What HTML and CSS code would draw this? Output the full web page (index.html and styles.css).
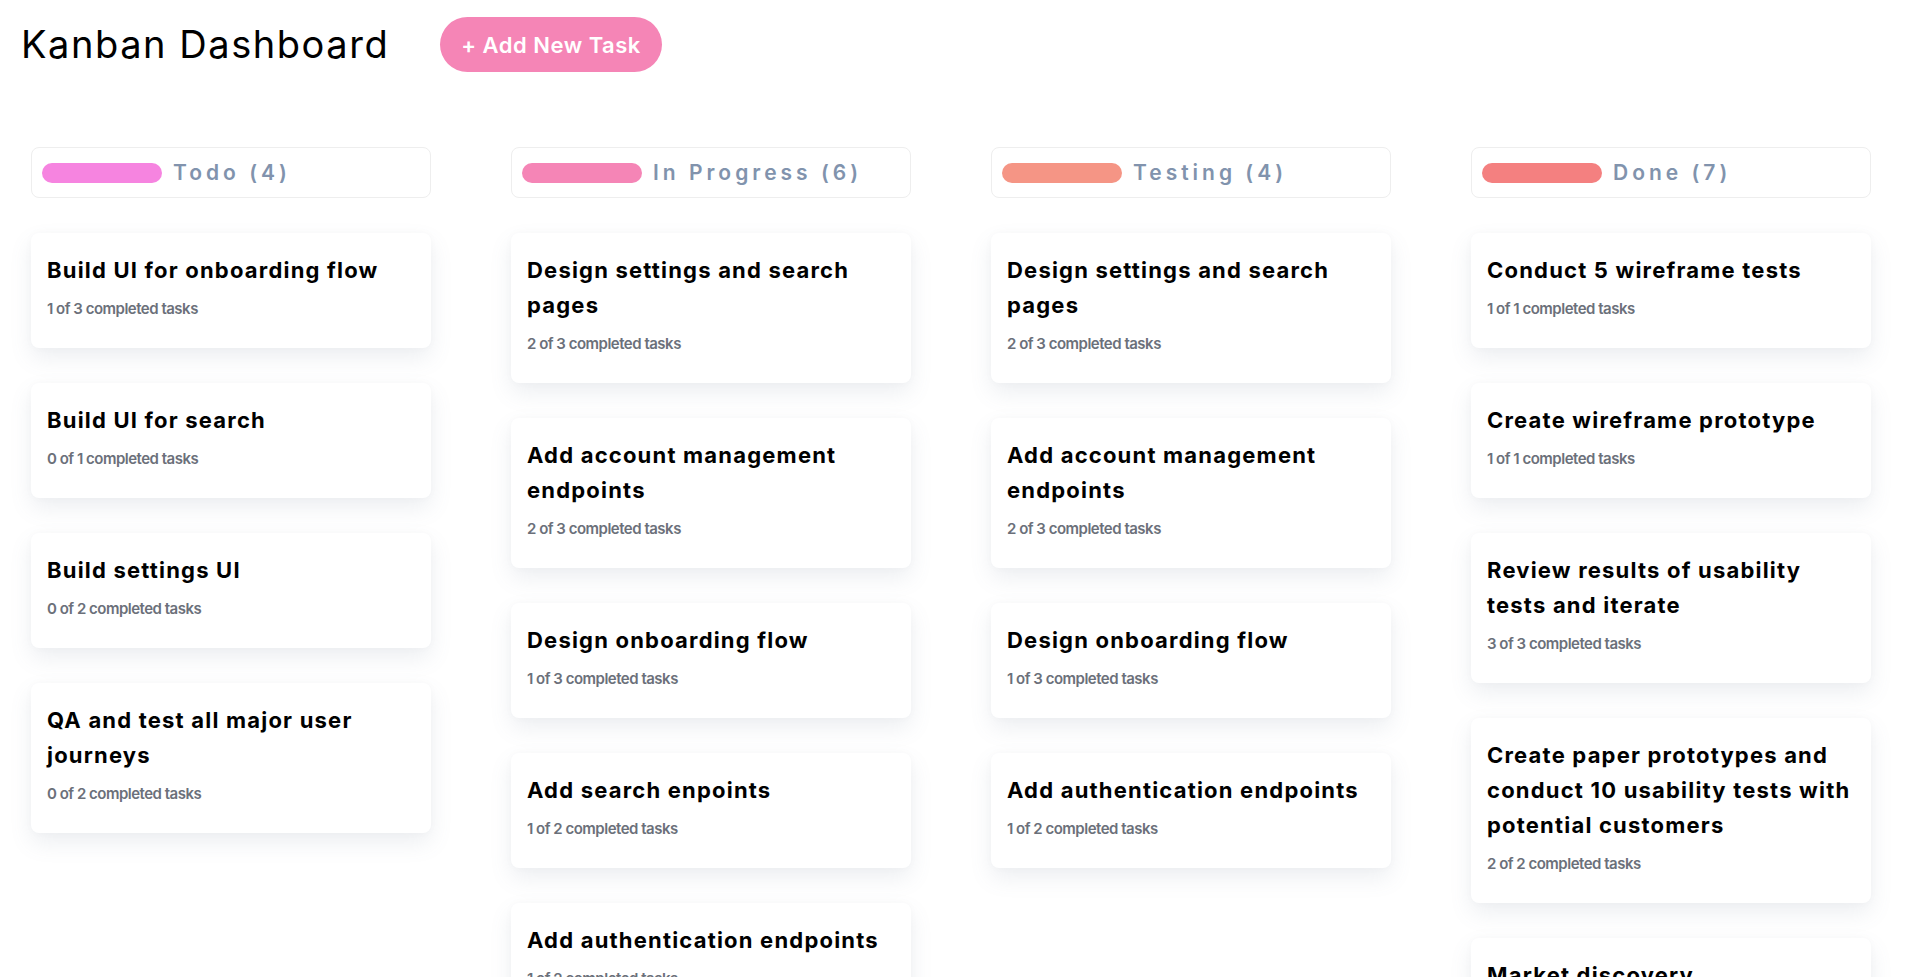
FILE: index.html
```html
<!DOCTYPE html>
<html lang="en">
<head>
<meta charset="utf-8">
<title>Kanban Dashboard</title>
<link rel="stylesheet" href="styles.css">
</head>
<body>
<header class="topbar">
  <h1 class="app-title">Kanban Dashboard</h1>
  <button class="add-btn">+ Add New Task</button>
</header>
<main class="board">
  <section class="column">
    <div class="col-header"><span class="pill pill-todo"></span><span class="col-title">Todo (4)</span></div>
    <div class="card"><h3 class="card-title">Build UI for onboarding flow</h3><p class="card-sub">1 of 3 completed tasks</p></div>
    <div class="card"><h3 class="card-title">Build UI for search</h3><p class="card-sub">0 of 1 completed tasks</p></div>
    <div class="card"><h3 class="card-title">Build settings UI</h3><p class="card-sub">0 of 2 completed tasks</p></div>
    <div class="card"><h3 class="card-title">QA and test all major user journeys</h3><p class="card-sub">0 of 2 completed tasks</p></div>
  </section>
  <section class="column">
    <div class="col-header"><span class="pill pill-progress"></span><span class="col-title">In Progress (6)</span></div>
    <div class="card"><h3 class="card-title">Design settings and search pages</h3><p class="card-sub">2 of 3 completed tasks</p></div>
    <div class="card"><h3 class="card-title">Add account management endpoints</h3><p class="card-sub">2 of 3 completed tasks</p></div>
    <div class="card"><h3 class="card-title">Design onboarding flow</h3><p class="card-sub">1 of 3 completed tasks</p></div>
    <div class="card"><h3 class="card-title">Add search enpoints</h3><p class="card-sub">1 of 2 completed tasks</p></div>
    <div class="card"><h3 class="card-title">Add authentication endpoints</h3><p class="card-sub">1 of 2 completed tasks</p></div>
    <div class="card"><h3 class="card-title">Add account settings endpoints</h3><p class="card-sub">0 of 2 completed tasks</p></div>
  </section>
  <section class="column">
    <div class="col-header"><span class="pill pill-testing"></span><span class="col-title">Testing (4)</span></div>
    <div class="card"><h3 class="card-title">Design settings and search pages</h3><p class="card-sub">2 of 3 completed tasks</p></div>
    <div class="card"><h3 class="card-title">Add account management endpoints</h3><p class="card-sub">2 of 3 completed tasks</p></div>
    <div class="card"><h3 class="card-title">Design onboarding flow</h3><p class="card-sub">1 of 3 completed tasks</p></div>
    <div class="card"><h3 class="card-title">Add authentication endpoints</h3><p class="card-sub">1 of 2 completed tasks</p></div>
  </section>
  <section class="column">
    <div class="col-header"><span class="pill pill-done"></span><span class="col-title">Done (7)</span></div>
    <div class="card"><h3 class="card-title">Conduct 5 wireframe tests</h3><p class="card-sub">1 of 1 completed tasks</p></div>
    <div class="card"><h3 class="card-title">Create wireframe prototype</h3><p class="card-sub">1 of 1 completed tasks</p></div>
    <div class="card"><h3 class="card-title">Review results of usability tests and iterate</h3><p class="card-sub">3 of 3 completed tasks</p></div>
    <div class="card"><h3 class="card-title">Create paper prototypes and conduct 10 usability tests with potential customers</h3><p class="card-sub">2 of 2 completed tasks</p></div>
    <div class="card"><h3 class="card-title">Market discovery</h3><p class="card-sub">3 of 3 completed tasks</p></div>
    <div class="card"><h3 class="card-title">Develop competitor analysis</h3><p class="card-sub">2 of 2 completed tasks</p></div>
    <div class="card"><h3 class="card-title">Research the market</h3><p class="card-sub">2 of 2 completed tasks</p></div>
  </section>
</main>
</body>
</html>
```
FILE: styles.css
```css
* {
  box-sizing: border-box;
}

body {
  margin: 0;
  background: #ffffff;
  font-family: "Inter", "Noto Sans", "Liberation Sans", sans-serif;
  color: #000000;
}

.topbar {
  display: flex;
  align-items: center;
  padding: 17px 0 0 21px;
}

.app-title {
  margin: 0;
  font-size: 38px;
  font-weight: 400;
  line-height: 55px;
  letter-spacing: 1.55px;
}

.add-btn {
  margin-left: 51px;
  height: 55px;
  padding: 0 21px;
  border: none;
  border-radius: 28px;
  background: #f585b6;
  color: #ffffff;
  font-family: inherit;
  font-size: 22px;
  font-weight: 600;
  letter-spacing: 0.5px;
}

.board {
  display: grid;
  grid-template-columns: repeat(4, 400px);
  column-gap: 80px;
  align-items: start;
  padding: 75px 0 40px 31px;
}

.column {
  display: flex;
  flex-direction: column;
  gap: 35px;
}

.col-header {
  display: flex;
  align-items: center;
  gap: 11px;
  height: 51px;
  padding: 0 10px;
  border: 1px solid #eeeeee;
  border-radius: 8px;
}

.pill {
  width: 120px;
  height: 20px;
  border-radius: 10px;
  flex-shrink: 0;
}

.pill-todo { background: #f684e0; }
.pill-progress { background: #f585b6; }
.pill-testing { background: #f59585; }
.pill-done { background: #f48080; }

.col-title {
  font-size: 21px;
  font-weight: 600;
  letter-spacing: 4px;
  color: #8193ad;
}

.card {
  background: #ffffff;
  border-radius: 8px;
  padding: 20px 16px 29px;
  box-shadow: 0 10px 22px rgba(110, 120, 150, 0.12), 0 0 10px rgba(0, 0, 0, 0.025);
}

.card-title {
  margin: 0;
  font-size: 22px;
  font-weight: 700;
  line-height: 35px;
  letter-spacing: 1.2px;
  color: #000000;
}

.card-sub {
  margin: 11px 0 0;
  font-size: 15px;
  font-weight: 600;
  line-height: 20px;
  letter-spacing: -0.5px;
  color: #6b707a;
}
```
